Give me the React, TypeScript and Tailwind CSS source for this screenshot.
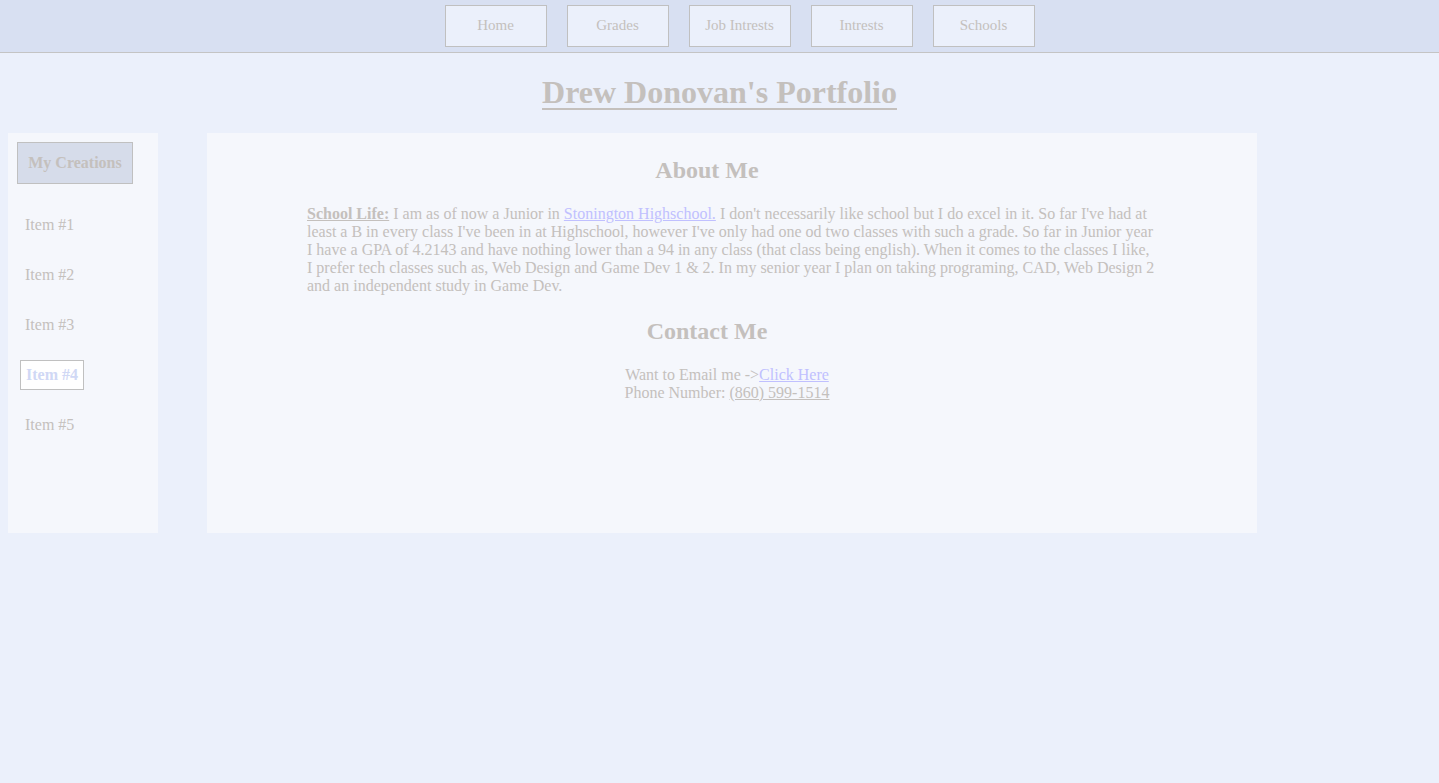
const navItems = ['Home', 'Grades', 'Job Intrests', 'Intrests', 'Schools']

const sideItems = ['Item #1', 'Item #2', 'Item #3', 'Item #4', 'Item #5']

export default function App() {
  return (
    <div
      className="min-h-[783px] bg-[#ebf0fb] text-[16px] leading-[normal] text-[#c4c0bd]"
      style={{ fontFamily: '"Liberation Serif", "Times New Roman", serif' }}
    >
      {/* Top nav */}
      <nav className="flex h-[53px] items-start justify-center gap-[20px] border-b border-[#c4c4c4] bg-[#d8e0f2] pl-[40px] pt-[5px]">
        {navItems.map((item) => (
          <button
            key={item}
            className="h-[42px] w-[102px] border border-[#c0c0c0] bg-[#ebf0fb] pb-[2px] text-[15px] text-[#c4c0bd]"
          >
            {item}
          </button>
        ))}
      </nav>

      <h1 className="pt-[21px] text-center text-[32px] font-bold leading-[37px] underline decoration-2 underline-offset-[5px]">
        Drew Donovan's Portfolio
      </h1>

      <div className="mt-[22px] flex gap-[49px] pl-[8px]">
        {/* Sidebar */}
        <aside className="h-[400px] w-[150px] bg-[#f5f7fc] pl-[9px] pt-[9px]">
          <button className="h-[42px] w-[116px] border border-[#c0c0c0] bg-[#d6dcea] font-bold text-[#c4c0bd]">
            My Creations
          </button>
          <ul className="mt-[32px] flex flex-col gap-[32px]">
            {sideItems.map((item, i) =>
              i === 3 ? (
                <li key={item} className="-my-[6px] ml-[3px]">
                  <span className="inline-block border border-[#c0c0c0] bg-white px-[5px] py-[5px] font-bold text-[#d0d8f5]">
                    {item}
                  </span>
                </li>
              ) : (
                <li key={item} className="pl-[8px]">
                  {item}
                </li>
              )
            )}
          </ul>
        </aside>

        {/* Main panel */}
        <main className="h-[400px] w-[1050px] bg-[#f5f7fc] pt-[23px]">
          <h2 className="w-[1000px] text-center text-[24px] font-bold leading-[28px]">About Me</h2>
          <p className="mx-[100px] mt-[21px]">
            <b className="underline">School Life:</b> I am as of now a Junior in{' '}
            <a href="#" className="text-[#c0c0ff] underline">
              Stonington Highschool.
            </a>{' '}
            I don't necessarily like school but I do excel in it. So far I've had at least a B in every class I've
            been in at Highschool, however I've only had one od two classes with such a grade. So far in Junior year
            I have a GPA of 4.2143 and have nothing lower than a 94 in any class (that class being english). When it
            comes to the classes I like, I prefer tech classes such as, Web Design and Game Dev 1 &amp; 2. In my
            senior year I plan on taking programing, CAD, Web Design 2 and an independent study in Game Dev.
          </p>
          <h2 className="mt-[22px] w-[1000px] text-center text-[24px] font-bold leading-[28px]">Contact Me</h2>
          <div className="mt-[21px] w-[1040px] text-center">
            <div>
              Want to Email me -&gt;
              <a href="#" className="text-[#c0c0ff] underline">
                Click Here
              </a>
            </div>
            <div>
              Phone Number: <span className="underline">(860) 599-1514</span>
            </div>
          </div>
        </main>
      </div>
    </div>
  )
}
